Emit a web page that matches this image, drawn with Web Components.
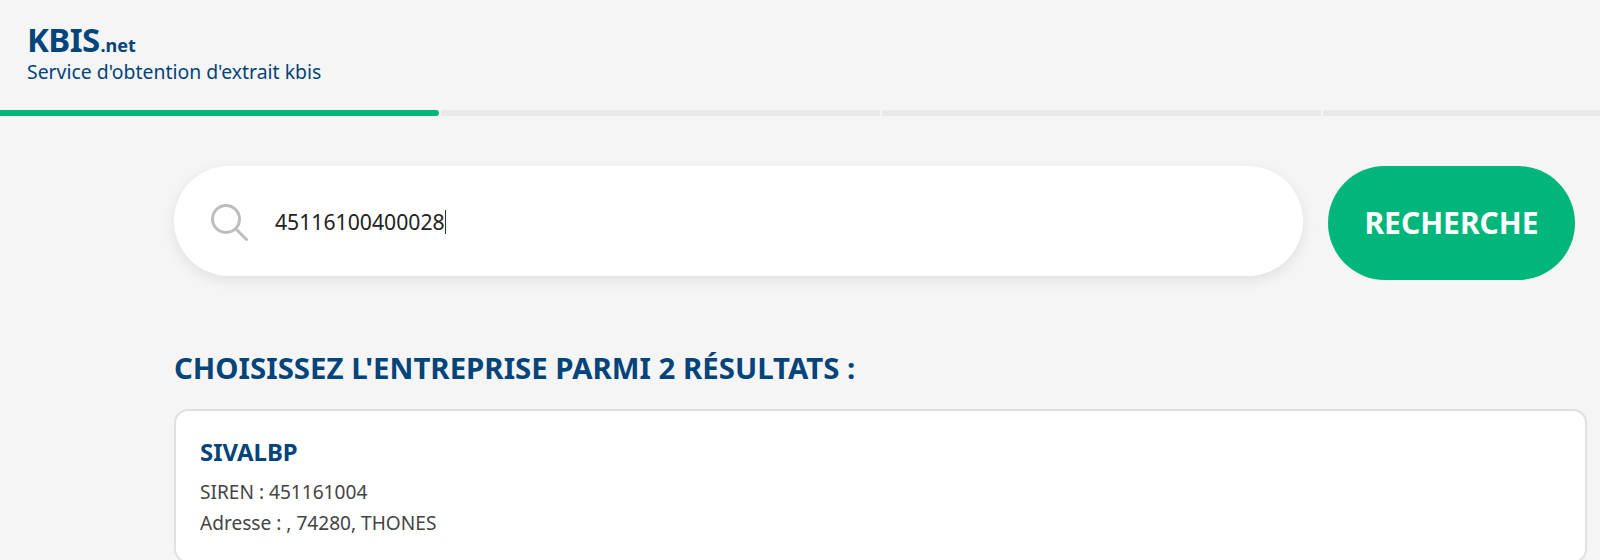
<!DOCTYPE html>
<html lang="fr">
<head>
<meta charset="utf-8">
<title>KBIS.net</title>
<style>
html, body
{
    margin: 0;
    height: 560px;
    overflow: hidden;
    background: #f5f5f5;
    font-family: "Noto Sans", "Open Sans", sans-serif;
}
</style>
</head>
<body>
<kbis-app>
    <kbis-header slot="header" subtitle="Service d'obtention d'extrait kbis"></kbis-header>
    <kbis-progress slot="progress" steps="4" current="1"></kbis-progress>
    <kbis-search value="45116100400028" label="RECHERCHE"></kbis-search>
    <kbis-results title="CHOISISSEZ L'ENTREPRISE PARMI 2 RÉSULTATS :">
        <kbis-card name="SIVALBP">
            <div>SIREN : 451161004</div>
            <div>Adresse : , 74280, THONES</div>
        </kbis-card>
    </kbis-results>
</kbis-app>
<script>
class KbisApp extends HTMLElement
{
    constructor()
    {
        super();
        this.attachShadow({mode:'open'}).innerHTML = `
<style>
:host { display:block; color:#03447a; }
main { padding:50px 13px 0 174px; }
</style>
<slot name="header"></slot>
<slot name="progress"></slot>
<main><slot></slot></main>`;
    }
}

class KbisHeader extends HTMLElement
{
    constructor()
    {
        super();
        this.attachShadow({mode:'open'}).innerHTML = `
<style>
:host { display:block; height:110px; box-sizing:border-box; padding:19px 0 0 27px; color:#03447a; }
.logo { font-size:33px; line-height:42px; font-weight:700; letter-spacing:-.6px; }
.logo small { font-size:18px; letter-spacing:0; margin-left:1px; }
.sub { font-size:19.4px; line-height:24px; margin-top:-6px; }
</style>
<div class="logo">KBIS<small>.net</small></div>
<div class="sub"></div>`;
    }

    connectedCallback()
    {
        this.shadowRoot.querySelector('.sub').textContent = this.getAttribute('subtitle');
    }
}

class KbisProgress extends HTMLElement
{
    constructor()
    {
        super();
        this.attachShadow({mode:'open'}).innerHTML = `
<style>
:host { display:flex; gap:2px; height:6px; overflow:hidden; }
i { flex:0 0 439px; background:#e9e9e9; }
i:last-child { flex:1; }
i.on { background:#00b67a; border-radius:0 3px 3px 0; }
</style>`;
    }

    connectedCallback()
    {
        const current = Number(this.getAttribute('current'));
        for (let n = 0; n < Number(this.getAttribute('steps')); n++)
        {
            const step = document.createElement('i');
            if (n < current) step.className = 'on';
            this.shadowRoot.appendChild(step);
        }
    }
}

class KbisSearch extends HTMLElement
{
    constructor()
    {
        super();
        this.attachShadow({mode:'open'}).innerHTML = `
<style>
:host { display:flex; gap:25px; align-items:flex-start; }
.box { flex:0 0 1129px; height:110px; box-sizing:border-box; padding:0 0 0 37px; background:#fff; border-radius:55px;
       box-shadow:0 4px 14px rgba(0,0,0,.09); display:flex; align-items:center; gap:27px; }
svg { display:block; margin-top:2px; }
.val { font-size:21.2px; color:#222; border-right:1px solid #333; line-height:24px; margin-top:1px; }
button { all:unset; flex:0 0 247px; height:114px; box-sizing:border-box; padding-bottom:1px; text-align:center; background:#00b67a;
         color:#fff; border-radius:57px; font:700 30px "Noto Sans", sans-serif; }
</style>
<div class="box">
    <svg width="37" height="37" viewBox="0 0 37 37" fill="none" stroke="#bdbdbd" stroke-width="3">
        <circle cx="15" cy="15" r="13.5"/>
        <path d="M25 25 L35.5 35.5" stroke-linecap="round"/>
    </svg>
    <span class="val"></span>
</div>
<button></button>`;
    }

    connectedCallback()
    {
        this.shadowRoot.querySelector('.val').textContent = this.getAttribute('value');
        this.shadowRoot.querySelector('button').textContent = this.getAttribute('label');
    }
}

class KbisResults extends HTMLElement
{
    constructor()
    {
        super();
        this.attachShadow({mode:'open'}).innerHTML = `
<style>
:host { display:block; }
h2 { margin:0; padding-top:70px; font-size:29.4px; line-height:36px; font-weight:700; color:#03447a; height:59px; }
</style>
<h2></h2>
<slot></slot>`;
    }

    connectedCallback()
    {
        this.shadowRoot.querySelector('h2').textContent = this.getAttribute('title');
        this.removeAttribute('title');
    }
}

class KbisCard extends HTMLElement
{
    constructor()
    {
        super();
        this.attachShadow({mode:'open'}).innerHTML = `
<style>
:host { display:block; height:154px; background:#fff; border:2px solid #e0e0e0; border-radius:14px; padding:25px 24px 0;
        box-sizing:border-box; }
h3 { margin:0 0 9px; font-size:23.9px; line-height:32px; font-weight:700; color:#03447a; }
.body { font-size:19.1px; line-height:31px; color:#444; }
</style>
<h3></h3>
<div class="body"><slot></slot></div>`;
    }

    connectedCallback()
    {
        this.shadowRoot.querySelector('h3').textContent = this.getAttribute('name');
    }
}

customElements.define('kbis-app', KbisApp);
customElements.define('kbis-header', KbisHeader);
customElements.define('kbis-progress', KbisProgress);
customElements.define('kbis-search', KbisSearch);
customElements.define('kbis-results', KbisResults);
customElements.define('kbis-card', KbisCard);
</script>
</body>
</html>
